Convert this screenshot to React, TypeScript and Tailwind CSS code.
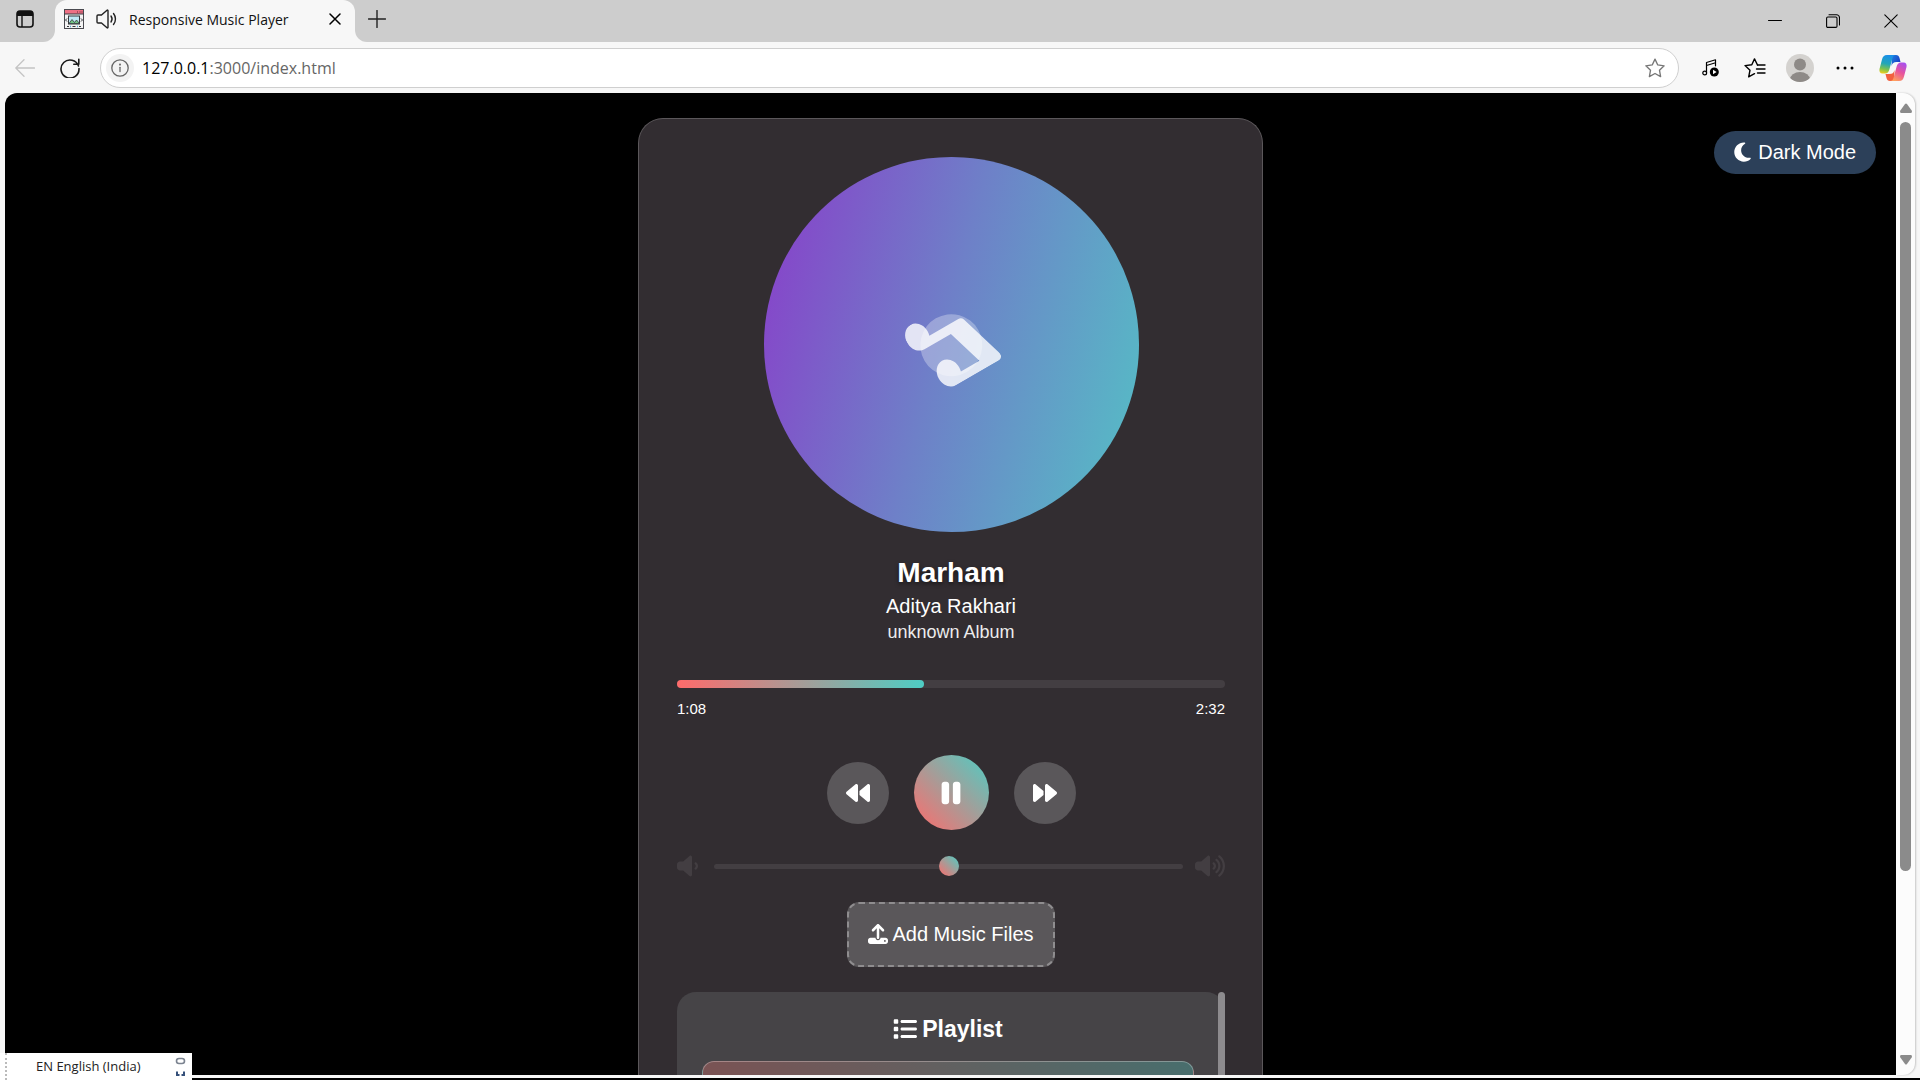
import type { ReactNode } from "react";
import {
  FaBackward,
  FaForward,
  FaList,
  FaMoon,
  FaMusic,
  FaPause,
  FaUpload,
  FaVolumeHigh,
  FaVolumeLow,
} from "react-icons/fa6";

const line = { fill: "none", stroke: "currentColor", strokeLinecap: "round", strokeLinejoin: "round" } as const;

function Favicon() {
  return (
    <svg viewBox="0 0 20 20" className="size-5 shrink-0">
      <rect x=".5" y=".5" width="19" height="19" fill="#f3f3f3" stroke="#4a4a50" />
      <rect x="1" y="1" width="18" height="4" fill="#ee7085" />
      <path d="M0 5h20" stroke="#3b3b40" />
      <path d="M13 3h1M15.500 3h1M17.500 3h1" stroke="#5b2b35" />
      <rect x="4.500" y="7" width="11" height="8" fill="#bfe8f5" stroke="#35383d" />
      <path d="M5 14.500l3-4 2.500 3 2-2.500 3 3.500z" fill="#71c585" stroke="#35383d" strokeWidth=".8" />
      <path d="M3 9.500L1.500 11 3 12.500M17 9.500l1.500 1.500-1.500 1.500" fill="none" stroke="#35383d" />
      <path d="M3 17.500h2M8.500 17.500h3M15 17.500h2" stroke="#35383d" />
      <path d="M6 17.500h1M13 17.500h1" stroke="#56a9d6" strokeWidth="1.500" />
    </svg>
  );
}

function CopilotLogo() {
  return (
    <svg viewBox="0 0 28 26" className="h-[26px] w-7">
      <defs>
        <linearGradient id="cpA" x1=".4" y1="0" x2=".2" y2="1">
          <stop offset="0" stopColor="#1a8fe8" />
          <stop offset=".45" stopColor="#22a6b8" />
          <stop offset=".75" stopColor="#7cc24e" />
          <stop offset="1" stopColor="#f3cf1c" />
        </linearGradient>
        <linearGradient id="cpB" x1=".8" y1="0" x2=".3" y2="1">
          <stop offset="0" stopColor="#a64ff0" />
          <stop offset=".5" stopColor="#e8549c" />
          <stop offset="1" stopColor="#ffa25c" />
        </linearGradient>
        <linearGradient id="cpC" x1="0" y1="0" x2="1" y2=".6">
          <stop offset="0" stopColor="#1d7fe0" />
          <stop offset="1" stopColor="#1a3fc4" />
        </linearGradient>
      </defs>
      <path d="M13 0h4c2 0 3 1 3.500 3l1 4h-4c-3 0-4 1-5 4z" fill="url(#cpC)" />
      <path d="M15 26h-4c-2 0-3-1-3.500-3l-1-4h4c3 0 4-1 5-4z" fill="#f2603f" />
      <path d="M8 0h9c-2 0-3 1-3.500 3l-3 11c-.8 3-2 4.500-4.500 4.500H3.500C1 18.500 0 16.500.5 14L3 4.500C3.800 1.500 5 0 8 0z" fill="url(#cpA)" />
      <path d="M20 26h-9c2 0 3-1 3.500-3l3-11c.8-3 2-4.500 4.500-4.500h2.500c2.500 0 3.500 2 3 4.500L25 21.500c-.8 3-2 4.500-5 4.500z" fill="url(#cpB)" />
    </svg>
  );
}

function IconButton({ label, className = "", children }: { label: string; className?: string; children: ReactNode }) {
  return (
    <button type="button" aria-label={label} className={`flex shrink-0 items-center justify-center ${className}`}>
      {children}
    </button>
  );
}

function TabStrip() {
  return (
    <div className="flex h-[42px] shrink-0 bg-[#f7f7f7]">
      <div className="flex w-[55px] shrink-0 rounded-br-xl bg-[#cdcdcd]">
        <IconButton label="Tab actions" className="w-[50px] pb-1">
          <svg viewBox="0 0 18 18" className="size-[18px]">
            <rect x="1" y="1" width="16" height="16" rx="3" fill="none" stroke="#111" strokeWidth="1.600" />
            <path d="M1 6V4a3 3 0 013-3h10a3 3 0 013 3v2z" fill="#111" />
            <path d="M6 6v11" stroke="#111" strokeWidth="1.400" />
          </svg>
        </IconButton>
      </div>
      <div className="w-[300px] shrink-0 bg-[#cdcdcd]">
        <div className="flex h-full items-center rounded-t-xl bg-[#f7f7f7] pr-3 pb-1 pl-[9px]">
          <Favicon />
          <svg viewBox="0 0 22 20" className="ml-3 h-5 w-[22px] shrink-0 text-[#222]" {...line} strokeWidth="1.400">
            <path d="M1 7v6c0 .6.400 1 1 1h3.500l5.500 4.800c.5.400 1 .2 1-.5V1.700c0-.7-.5-.9-1-.5L5.500 6H2c-.6 0-1 .4-1 1z" />
            <path d="M15 7c1.300 1.800 1.300 4.200 0 6M17.500 4.500c2.600 3.200 2.600 7.800 0 11" />
          </svg>
          <span className="ml-[11px] flex-1 truncate text-[14px] text-[#111]">Responsive Music Player</span>
          <IconButton label="Close tab" className="size-4">
            <svg viewBox="0 0 12 12" className="size-3" {...line} strokeWidth="1.500">
              <path d="M1 1l10 10M11 1L1 11" />
            </svg>
          </IconButton>
        </div>
      </div>
      <div className="flex flex-1 rounded-bl-xl bg-[#cdcdcd]">
        <IconButton label="New tab" className="w-11 pb-1">
          <svg viewBox="0 0 18 18" className="size-[18px] text-[#222]" {...line} strokeWidth="1.400">
            <path d="M9 .5v17M.5 9h17" />
          </svg>
        </IconButton>
        <div className="ml-auto flex">
          <IconButton label="Minimize" className="w-[58px]">
            <svg viewBox="0 0 14 14" className="size-[14px]" {...line} strokeWidth="1">
              <path d="M.5 6.500h13" />
            </svg>
          </IconButton>
          <IconButton label="Restore" className="w-[58px]">
            <svg viewBox="0 0 14 14" className="size-[14px]" {...line} strokeWidth="1.100">
              <rect x=".6" y="3" width="10.400" height="10.400" rx="1.200" />
              <path d="M3 .8h7.500a3 3 0 013 3V11" />
            </svg>
          </IconButton>
          <IconButton label="Close window" className="w-[58px]">
            <svg viewBox="0 0 14 14" className="size-[14px]" {...line} strokeWidth="1.100">
              <path d="M.8.8l12.400 12.400M13.200.8L.8 13.200" />
            </svg>
          </IconButton>
        </div>
      </div>
    </div>
  );
}

function AddressBar() {
  return (
    <div className="flex h-[51px] shrink-0 items-center bg-[#f7f7f7] pt-px">
      <IconButton label="Back" className="w-[50px] text-[#c4c4c4]">
        <svg viewBox="0 0 20 18" className="h-[18px] w-5" {...line} strokeWidth="1.300">
          <path d="M19.500 9H.8M9 .8L.8 9 9 17.200" />
        </svg>
      </IconButton>
      <IconButton label="Refresh" className="w-10 text-[#1a1a1a]">
        <svg viewBox="0 0 20 20" className="size-5" {...line} strokeWidth="1.600">
          <path d="M18.500 8A9 9 0 1019 10.500M18.800 1.200v5h-5" />
        </svg>
      </IconButton>
      <div className="ml-[10px] flex h-10 min-w-0 flex-1 items-center rounded-full border border-[#cfcfcf] bg-white pr-3 pl-[5px]">
        <IconButton label="Site information" className="size-7 rounded-full bg-[#f3f3f3] text-[#666]">
          <svg viewBox="0 0 18 18" className="size-[18px]" {...line} strokeWidth="1.300">
            <circle cx="9" cy="9" r="8.200" />
            <path d="M9 8.300v4.200" />
            <circle cx="9" cy="5.600" r=".4" fill="currentColor" />
          </svg>
        </IconButton>
        <p className="ml-2 flex-1 text-[16px] text-[#666]">
          <span className="text-black">127.0.0.1</span>:3000/index.html
        </p>
        <IconButton label="Add to favorites" className="text-[#777]">
          <svg viewBox="0 0 22 21" className="h-5 w-[22px]" {...line} strokeWidth="1.400">
            <path d="M11 1.200l2.900 6.100 6.700.9-4.900 4.600 1.200 6.700-5.900-3.200-5.900 3.200 1.200-6.700L1.400 8.200l6.700-.9z" />
          </svg>
        </IconButton>
      </div>
      <div className="flex shrink-0 items-center">
        <IconButton label="Media" className="ml-[23px]">
          <svg viewBox="0 0 18 18" className="size-[18px]" {...line} strokeWidth="1.200">
            <path d="M4.500 13.500V3.500L13.500.8v6M4.500 6.500l9-2.700" />
            <circle cx="2.700" cy="14" r="1.900" />
            <circle cx="12.300" cy="13" r="4.500" fill="#000" stroke="none" />
            <path d="M11 10.800v4.400l3.600-2.200z" fill="#fff" stroke="none" />
          </svg>
        </IconButton>
        <IconButton label="Favorites" className="ml-6">
          <svg viewBox="0 0 22 20" className="h-5 w-[22px]" {...line} strokeWidth="1.400">
            <path d="M13.500 7L10.500.9 7.800 6.800 1 7.600l5 4.600-1.300 6.700 5.800-3.200" />
            <path d="M13.500 7h7.500M12.500 11h8.500M13.500 15h7.500" />
          </svg>
        </IconButton>
        <IconButton label="Profile" className="ml-5">
          <svg viewBox="0 0 28 28" className="size-7">
            <clipPath id="av">
              <circle cx="14" cy="14" r="14" />
            </clipPath>
            <circle cx="14" cy="14" r="14" fill="#d4d2cf" />
            <circle cx="14" cy="10.500" r="6" fill="#8e8a87" />
            <ellipse cx="14" cy="25.500" rx="10" ry="7.500" fill="#8e8a87" clipPath="url(#av)" />
          </svg>
        </IconButton>
        <IconButton label="Settings and more" className="ml-[22px]">
          <svg viewBox="0 0 18 4" className="h-1 w-[18px]">
            <circle cx="2" cy="2" r="1.500" />
            <circle cx="9" cy="2" r="1.500" />
            <circle cx="16" cy="2" r="1.500" />
          </svg>
        </IconButton>
        <IconButton label="Copilot" className="mr-[13px] ml-[25px]">
          <CopilotLogo />
        </IconButton>
      </div>
    </div>
  );
}

function AlbumArt() {
  return (
    <div className="relative mx-auto flex size-[375px] rotate-60 items-center justify-center rounded-full bg-[linear-gradient(45deg,#8e32ca,#6e80c8_48%,#50cac5)]">
      <FaMusic className="size-[75px] text-white/80" />
      <span className="absolute size-[62px] rounded-full bg-white/30" />
    </div>
  );
}

function Player() {
  return (
    <main className="mx-auto mt-[25px] w-full max-w-[625px] rounded-t-[25px] border border-b-0 border-[#5b575a] bg-[#322d31] pt-[38px] pr-[37px] pl-[38px] text-white">
      <AlbumArt />
      <section className="mt-[25px] text-center">
        <h1 className="text-[28px] leading-8 font-bold [text-shadow:0_2px_4px_rgba(0,0,0,0.5)]">Marham</h1>
        <p className="mt-[3px] text-[20px] leading-7">Aditya Rakhari</p>
        <p className="text-[18px] leading-6 text-[#ececec]">unknown Album</p>
      </section>
      <section className="mt-9">
        <div
          role="progressbar"
          aria-label="Track progress"
          aria-valuenow={45}
          className="h-2 rounded-full bg-[#433e42]"
        >
          <div className="h-full w-[45%] rounded-full bg-[linear-gradient(90deg,#ff6b6b,#4ecdc4)]" />
        </div>
        <div className="mt-[11px] flex justify-between text-[15px] leading-5">
          <span>1:08</span>
          <span>2:32</span>
        </div>
      </section>
      <div className="mt-9 flex items-center justify-center gap-[25px]">
        <IconButton label="Previous" className="size-[62px] rounded-full bg-[#5a575a] text-[24px]">
          <FaBackward />
        </IconButton>
        <IconButton
          label="Pause"
          className="size-[75px] rounded-full bg-[linear-gradient(45deg,#ff6b6b,#4ecdc4)] text-[30px]"
        >
          <FaPause />
        </IconButton>
        <IconButton label="Next" className="size-[62px] rounded-full bg-[#5a575a] text-[24px]">
          <FaForward />
        </IconButton>
      </div>
      <div className="mt-6 flex h-6 items-center text-[24px] text-[#433e42]">
        <FaVolumeLow className="w-[21px] shrink-0" />
        <input
          type="range"
          aria-label="Volume"
          defaultValue={50}
          className="mr-3 ml-4 h-[5px] min-w-0 flex-1 appearance-none rounded-full bg-[#433e42] [&::-webkit-slider-thumb]:size-5 [&::-webkit-slider-thumb]:appearance-none [&::-webkit-slider-thumb]:rounded-full [&::-webkit-slider-thumb]:bg-[linear-gradient(45deg,#ff6b6b,#4ecdc4)]"
        />
        <FaVolumeHigh className="w-[30px] shrink-0" />
      </div>
      <button
        type="button"
        className="mx-auto mt-6 flex h-[65px] items-center gap-1 rounded-xl border-2 border-dashed border-[#8f8d8f] bg-[#5a575a] px-[19px] pb-px text-[20px]"
      >
        <FaUpload />
        Add Music Files
      </button>
      <section className="mt-[25px] flex h-[500px] rounded-[19px] bg-[#464447]">
        <div className="flex-1 py-[21px] pr-6 pl-[25px]">
          <h2 className="flex items-center justify-center gap-[5px] text-[23px] leading-8 font-bold">
            <FaList className="size-6" />
            Playlist
          </h2>
          <ul className="mt-4">
            <li className="h-16 rounded-xl border border-white/30 bg-[linear-gradient(45deg,#805051,#486e6d)]" />
          </ul>
        </div>
        <div className="w-[7px] rounded-full bg-[#8d8b8e]" />
      </section>
    </main>
  );
}

function PageScrollbar() {
  return (
    <div className="flex w-[19px] shrink-0 flex-col items-center rounded-r-xl bg-[#fcfcfc] py-[10px] text-[#8b8b8b] shadow-[1px_0_2px_rgba(0,0,0,0.2)]">
      <svg viewBox="0 0 12 10" className="h-[10px] w-3 shrink-0" fill="currentColor">
        <path d="M5 1Q6 0 7 1l5 7q0 2-1 2H1Q0 10 0 8z" />
      </svg>
      <div className="mt-[9px] h-[749px] w-[11px] shrink rounded-full bg-[#8b8b8b]" />
      <svg viewBox="0 0 12 10" className="mt-auto h-[10px] w-3 shrink-0" fill="currentColor">
        <path d="M5 9q1 1 2 0l5-7q0-2-1-2H1Q0 0 0 2z" />
      </svg>
    </div>
  );
}

function LanguageBar() {
  return (
    <div className="absolute bottom-0 left-0 flex h-[27px] w-48 items-center bg-white px-[5px] text-[#222]">
      <span className="h-full border-l-2 border-dotted border-[#bbb]" />
      <span className="flex-1 pl-[29px] text-[13px] whitespace-nowrap">EN English (India)</span>
      <svg viewBox="0 0 12 20" className="h-5 w-3" fill="none" strokeWidth="1.600">
        <rect x="1.500" y="1.500" width="8" height="5" rx="2.500" stroke="#7b8390" />
        <path d="M2 14.500v3.500h2.500M9 14.500v3.500H6.500" stroke="#35507a" strokeWidth="2" />
      </svg>
    </div>
  );
}

export default function App() {
  return (
    <div className="relative flex h-screen flex-col overflow-hidden bg-[#f7f7f7] font-['Open_Sans','Noto_Sans',sans-serif]">
      <TabStrip />
      <AddressBar />
      <div className="mb-[3px] flex min-h-0 flex-1 px-[5px]">
        <div className="relative min-w-0 flex-1 overflow-hidden rounded-tl-xl bg-black font-['Liberation_Sans',Arial,sans-serif]">
          <Player />
          <button
            type="button"
            className="absolute top-[38px] right-5 flex h-[43px] items-center gap-[7px] rounded-full bg-[#2c4059] px-5 pb-0.5 text-[20px] text-white"
          >
            <FaMoon className="h-[22px] w-[17px]" />
            Dark Mode
          </button>
        </div>
        <PageScrollbar />
      </div>
      <div className="h-0.5 shrink-0 bg-black" />
      <LanguageBar />
    </div>
  );
}
